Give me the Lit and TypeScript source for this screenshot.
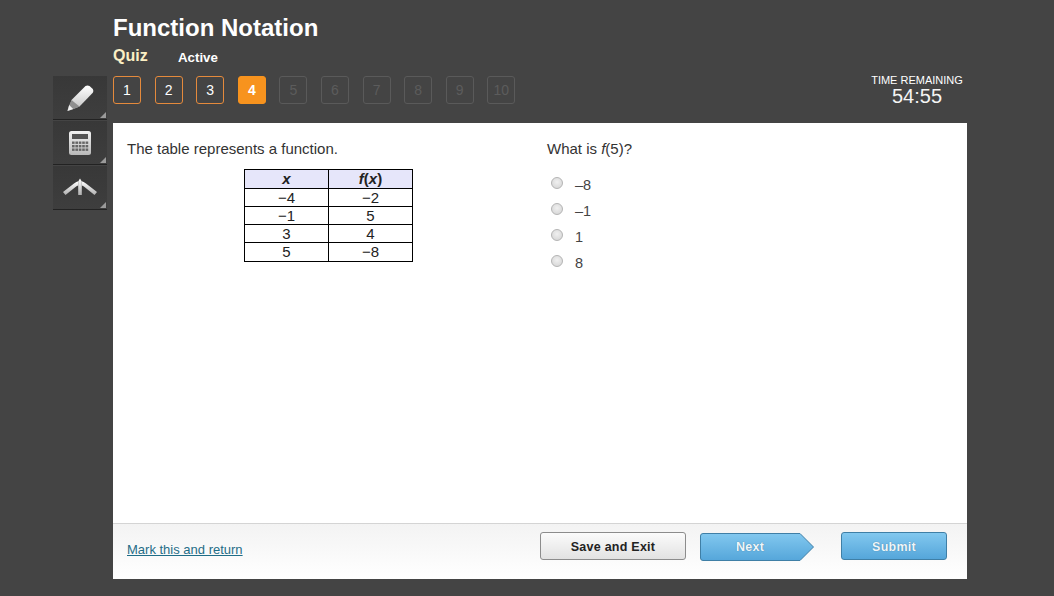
import { LitElement, html, css, svg } from "lit";
import { customElement } from "lit/decorators.js";

const STEPS = [1, 2, 3, 4, 5, 6, 7, 8, 9, 10];
const OPTIONS = ["–8", "–1", "1", "8"];
const ROWS = [["−4", "−2"], ["−1", "5"], ["3", "4"], ["5", "−8"]];

const pencil = svg`<svg width="30" height="28" viewBox="0 0 30 28">
  <defs><linearGradient id="g1" x1="0" y1="0" x2="0" y2="1"><stop offset="0" stop-color="#fff"/><stop offset="1" stop-color="#c4c4c4"/></linearGradient></defs>
  <path d="M20.5 2 Q22.5 .8 24.5 2 L27.8 5 Q29 7 27.8 8.8 L14.5 22.5 L8 25 L5 21.5 L6.5 16 Z" fill="url(#g1)"/>
  <path d="M6.5 16 L14.5 22.5 L7.5 25.5 L2.5 27 L3.8 22 Z" fill="#8f8f8f"/>
  <path d="M4.2 21 L8.2 25 L2.5 27 Z" fill="#efefef"/>
</svg>`;

const calc = svg`<svg width="24" height="26" viewBox="0 0 24 26">
  <defs><linearGradient id="g2" x1="0" y1="0" x2="0" y2="1"><stop offset="0" stop-color="#f4f4f4"/><stop offset="1" stop-color="#b8b8b8"/></linearGradient></defs>
  <rect x="1" y="1" width="22" height="24" rx="2.5" fill="url(#g2)"/>
  <rect x="4" y="4" width="16" height="5" fill="#555"/>
  ${[11.5, 15, 18.5].flatMap((y) => [4, 7.4, 10.8, 14.2, 17.6].map((x) => svg`<rect x=${x} y=${y} width="2.6" height="2.4" fill="#666"/>`))}
</svg>`;

const ref = svg`<svg width="36" height="20" viewBox="0 0 36 20">
  <defs><linearGradient id="g4" x1="0" y1="0" x2="0" y2="1"><stop offset="0" stop-color="#ffffff"/><stop offset="1" stop-color="#b0b0b0"/></linearGradient></defs>
  <path d="M1 14 L12 5.5 Q14.5 3.6 16.2 3.2 L16.2 7.4 Q15 7.8 13.5 9 L3.5 17 Z" fill="url(#g4)"/>
  <path d="M35 14 L24 5.5 Q21.5 3.6 19.8 3.2 L19.8 7.4 Q21 7.8 22.5 9 L32.5 17 Z" fill="url(#g4)"/>
  <path d="M18 .5 L19.8 3.5 L19.8 17 L16.2 17 L16.2 3.5 Z" fill="url(#g4)"/>
</svg>`;

@customElement("app-root")
export class AppRoot extends LitElement {
  static styles = css`
    :host {
      display: block;
      height: 596px;
      background: #444444;
      font-family: "Liberation Sans", Arial, sans-serif;
      overflow: hidden;
    }
    .page {
      display: grid;
      grid-template-columns: 54px 854px;
      grid-template-rows: 76px 47px 456px;
      column-gap: 6px;
      margin-left: 53px;
      width: 914px;
    }
    .head { grid-column: 2; grid-row: 1; }
    h1 {
      margin: 0;
      padding-top: 12px;
      font-size: 24px;
      line-height: 31px;
      font-weight: bold;
      color: #fff;
    }
    .sub {
      display: flex;
      align-items: flex-start;
      margin-top: 3px;
      font-weight: bold;
    }
    .kind { width: 65px; font-size: 16px; line-height: 20px; color: #fbefc4; }
    .state { padding-top: 2px; font-size: 13.3px; line-height: 20px; color: #fff; }

    .tools { grid-column: 1; grid-row: 2 / 4; display: flex; flex-direction: column; align-self: start; }
    .tool {
      position: relative;
      display: flex;
      align-items: center;
      justify-content: center;
      height: 44px;
      box-sizing: border-box;
      background: linear-gradient(#383838, #3e3e3e);
      border-bottom: 1px solid #222;
      margin-bottom: 1px;
    }
    .tool::after {
      content: "";
      position: absolute;
      right: 1px;
      bottom: 1px;
      border-style: solid;
      border-width: 0 0 6px 6px;
      border-color: transparent transparent #9a9a9a transparent;
    }

    .bar { grid-column: 2; grid-row: 2; display: flex; justify-content: space-between; }
    .nav { display: flex; gap: 13.6px; align-items: flex-start; }
    .step {
      width: 28px;
      height: 28px;
      box-sizing: border-box;
      display: flex;
      align-items: center;
      justify-content: center;
      border: 1px solid #e58a3c;
      border-radius: 3px;
      background: #444;
      color: #fff;
      font-size: 14px;
    }
    .step.current { background: #f7931e; border-color: #f7931e; font-weight: bold; }
    .step.locked { border-color: #5a5a5a; color: #5c5c5c; }
    .timer { width: 92px; margin-right: 4px; color: #fff; text-align: center; font-size: 11px; line-height: 12px; }
    .timer b { display: block; font-weight: normal; font-size: 20px; line-height: 21px; color: #f4f4f4; }
    .timer span { display: block; margin-top: -2px; white-space: nowrap; }

    .main { grid-column: 2; grid-row: 3; display: flex; flex-direction: column; background: #fff; }
    .content { flex: 1; display: grid; grid-template-columns: 420px 1fr; padding: 18px 14px 0; color: #333; font-size: 15px; line-height: 16px; }
    .content p { margin: 0; }
    table {
      margin: 12px 0 0 117px;
      border-collapse: collapse;
      width: 169px;
      color: #222;
      font-size: 15px;
      text-align: center;
    }
    td, th { width: 84px; padding: 0; height: 17px; line-height: 16px; border: 1px solid #000; }
    th { background: #e6e6fa; height: 18px; font-weight: bold; }
    tr:last-child td { height: 18px; }
    .options { margin-top: 18px; display: flex; flex-direction: column; gap: 8px; }
    .opt { display: flex; align-items: center; height: 18px; padding-left: 4px; gap: 12px; color: #444; font-size: 14.5px; }
    .radio {
      width: 12px;
      height: 12px;
      margin-top: -2px;
      border-radius: 50%;
      border: 1px solid #b4b4b4;
      box-sizing: border-box;
      background: radial-gradient(circle at 50% 40%, #f0f0f0, #d2d2d2);
    }
    .opt span:last-child { padding-top: 2px; }
    .footer {
      height: 56px;
      box-sizing: border-box;
      border-top: 1px solid #d4d4d4;
      background: linear-gradient(#f3f3f3, #fff);
      display: flex;
      align-items: flex-start;
      padding: 8px 20px 0 14px;
    }
    .link { margin-top: 10px; color: #1f6d87; font-size: 13px; line-height: 16px; text-decoration: underline; flex: 1; }
    .btn {
      height: 28px;
      box-sizing: border-box;
      display: flex;
      align-items: center;
      justify-content: center;
      padding-top: 1px;
      border-radius: 3px;
      font-size: 12.5px;
      font-weight: bold;
      letter-spacing: 0.25px;
    }
    .save { width: 146px; border: 1px solid #8c8c8c; background: linear-gradient(#fbfbfb, #e2e2e2); color: #222; }
    .blue { color: #eef6fb; background: linear-gradient(#82c8ef, #55a6da); text-shadow: 0 0 1px #3a6f90; }
    .next-wrap { position: relative; width: 114px; height: 28px; margin: 1px 27px 0 14px; }
    .next-wrap svg { position: absolute; inset: 0; }
    .next { position: relative; width: 100px; background: none; padding-top: 0; }
    .submit { width: 106px; border: 1px solid #3f7fa6; }
  `;

  render() {
    return html`
      <div class="page">
        <div class="head">
          <h1>Function Notation</h1>
          <div class="sub"><span class="kind">Quiz</span><span class="state">Active</span></div>
        </div>
        <div class="tools">
          <div class="tool">${pencil}</div>
          <div class="tool">${calc}</div>
          <div class="tool">${ref}</div>
        </div>
        <div class="bar">
          <div class="nav">
            ${STEPS.map((n) => html`<div class="step ${n === 4 ? "current" : n > 4 ? "locked" : ""}">${n}</div>`)}
          </div>
          <div class="timer"><span>TIME REMAINING</span><b>54:55</b></div>
        </div>
        <div class="main">
          <div class="content">
            <div>
              <p>The table represents a function.</p>
              <table>
                <tr><th><i>x</i></th><th><i>f</i>(<i>x</i>)</th></tr>
                ${ROWS.map((r) => html`<tr><td>${r[0]}</td><td>${r[1]}</td></tr>`)}
              </table>
            </div>
            <div>
              <p>What is <i>f</i>(5)?</p>
              <div class="options">
                ${OPTIONS.map((o) => html`<div class="opt"><span class="radio"></span><span>${o}</span></div>`)}
              </div>
            </div>
          </div>
          <div class="footer">
            <span class="link">Mark this and return</span>
            <div class="btn save">Save and Exit</div>
            <div class="next-wrap">
              <svg width="114" height="28" viewBox="0 0 114 28">
                <defs><linearGradient id="g3" x1="0" y1="0" x2="0" y2="1"><stop offset="0" stop-color="#82c8ef"/><stop offset="1" stop-color="#55a6da"/></linearGradient></defs>
                <path d="M3 .5 H100 L113.5 14 L100 27.5 H3 Q.5 27.5 .5 25 V3 Q.5 .5 3 .5 Z" fill="url(#g3)" stroke="#3f7fa6"/>
              </svg>
              <div class="btn blue next">Next</div>
            </div>
            <div class="btn blue submit">Submit</div>
          </div>
        </div>
      </div>
    `;
  }
}
